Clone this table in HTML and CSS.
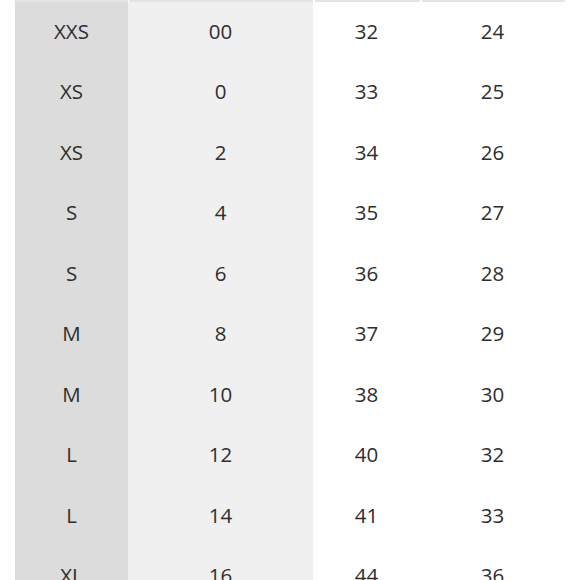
FILE: index.html
```html
<!DOCTYPE html>
<html>
<head>
<meta charset="utf-8">
<link rel="stylesheet" href="styles.css">
</head>
<body>
<div class="chart">
  <div class="top"><span class="t1"></span><span class="t2"></span><span class="t3"></span><span class="t4"></span></div>
  <div class="row"><span class="c1">XXS</span><span class="c2">00</span><span class="c3">32</span><span class="c4">24</span></div>
  <div class="row"><span class="c1">XS</span><span class="c2">0</span><span class="c3">33</span><span class="c4">25</span></div>
  <div class="row"><span class="c1">XS</span><span class="c2">2</span><span class="c3">34</span><span class="c4">26</span></div>
  <div class="row"><span class="c1">S</span><span class="c2">4</span><span class="c3">35</span><span class="c4">27</span></div>
  <div class="row"><span class="c1">S</span><span class="c2">6</span><span class="c3">36</span><span class="c4">28</span></div>
  <div class="row"><span class="c1">M</span><span class="c2">8</span><span class="c3">37</span><span class="c4">29</span></div>
  <div class="row"><span class="c1">M</span><span class="c2">10</span><span class="c3">38</span><span class="c4">30</span></div>
  <div class="row"><span class="c1">L</span><span class="c2">12</span><span class="c3">40</span><span class="c4">32</span></div>
  <div class="row"><span class="c1">L</span><span class="c2">14</span><span class="c3">41</span><span class="c4">33</span></div>
  <div class="row"><span class="c1">XL</span><span class="c2">16</span><span class="c3">44</span><span class="c4">36</span></div>
</div>
</body>
</html>
```
FILE: styles.css
```css
html, body {
  margin: 0;
  padding: 0;
  background: #ffffff;
  overflow: hidden;
}
.chart {
  width: 550px;
  margin-left: 15px;
  font-family: "Open Sans", "Noto Sans", sans-serif;
  font-size: 20.5px;
  color: #2e2e2e;
}
.top {
  display: grid;
  grid-template-columns: 113px 185px 107px 145px;
  height: 2px;
}
.top span {
  background: #e4e4e4;
}
.top .t2 { margin-left: 1px; }
.top .t3 { margin-left: 2px; }
.top .t4 { margin-left: 2px; }
.row {
  display: grid;
  grid-template-columns: 113px 185px 107px 145px;
  height: 60.5px;
}
.row span {
  display: flex;
  align-items: center;
  justify-content: center;
  padding-bottom: 3px;
}
.c1 { background: #dcdcdc; }
.c2 { background: #f0f0f0; }
.c3, .c4 { background: #ffffff; }
```
